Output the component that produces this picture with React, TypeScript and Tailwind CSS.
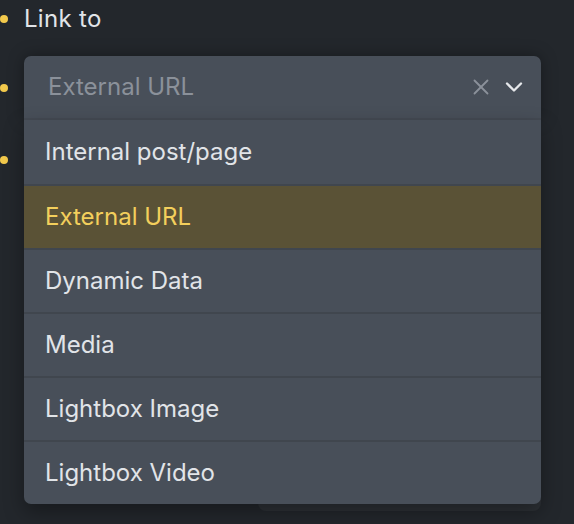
import { X, ChevronDown } from "lucide-react";

const options = [
  "Internal post/page",
  "External URL",
  "Dynamic Data",
  "Media",
  "Lightbox Image",
  "Lightbox Video",
];

function Dot() {
  return <span className="w-[8px] h-[8px] rounded-full bg-[#f2c94c] shrink-0" />;
}

export default function App() {
  return (
    <div
      className="relative h-[524px] w-[574px] overflow-hidden bg-[#23272c] text-[24px] text-[#e1e4e8]"
      style={{ fontFamily: "Inter, 'Noto Sans', sans-serif" }}
    >
      {/* Link to */}
      <div className="flex items-center h-[38px] gap-[16px]">
        <Dot />
        <span className="tracking-[0.3px]">Link to</span>
      </div>

      {/* select control */}
      <div className="flex items-center mt-[18px] gap-[16px]">
        <Dot />
        <div className="flex items-center h-[64px] w-[517px] rounded-t-[7px] bg-[#484f59] pl-[24px] pr-[13px] border-b-2 border-[#444a53] shadow-[0_0_16px_rgba(0,0,0,0.35)]">
          <span className="flex-1 text-[#8b919a]">External URL</span>
          <X size={26} strokeWidth={1.7} className="text-[#8b919a] mr-[6px]" />
          <ChevronDown size={28} strokeWidth={2} className="text-[#e6e8eb]" />
        </div>
      </div>

      {/* next row, mostly hidden by the menu */}
      <div className="flex items-center h-[64px] mt-[8px] gap-[16px]">
        <Dot />
      </div>
      <div className="ml-[258px] w-[283px] h-[319px] rounded-b-[8px] bg-[#2d3136]" />

      {/* open menu */}
      <div className="absolute left-[24px] top-[120px] w-[517px] rounded-b-[7px] bg-[#484f59] shadow-[0_8px_20px_rgba(0,0,0,0.35)] overflow-hidden">
        {options.map((o, i) => (
          <div
            key={o}
            className={`flex items-center pl-[21px] ${i === 0 ? "h-[64px]" : "h-[64px] border-t-2 border-[#40464e]"} ${
              o === "External URL" ? "bg-[#5a5236] text-[#f3cf5c] border-[#5a5236]" : ""
            } ${i === options.length - 1 ? "h-[63px]" : ""}`}
          >
            {o}
          </div>
        ))}
      </div>
    </div>
  );
}
